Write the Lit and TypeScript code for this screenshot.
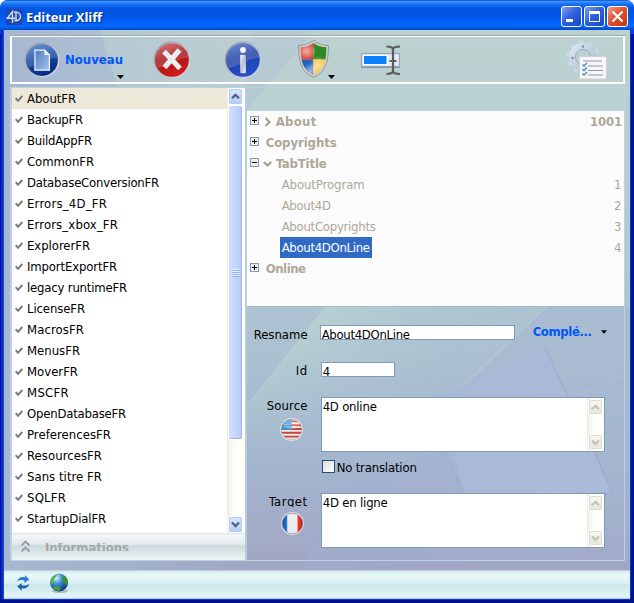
import { LitElement, html, css, svg, nothing } from "lit";
import { customElement, property } from "lit/decorators.js";

/** A single line of text tracked so that it occupies a given width. */
@customElement("fit-text")
class FitText extends LitElement {
  @property() text = "";
  @property({ type: Number }) w = 0;
  static styles = css`
    :host { display: inline-block; white-space: pre; flex: none; }
  `;
  updated() {
    const s = this.renderRoot.querySelector("span") as HTMLElement;
    s.style.letterSpacing = "0px";
    const gap = (this.w + 1 - s.getBoundingClientRect().width) / this.text.length;
    s.style.letterSpacing = `${gap.toFixed(3)}px`;
  }
  render() {
    return html`<span>${this.text}</span>`;
  }
}

const t = (text: string, w: number) => html`<fit-text .text=${text} .w=${w}></fit-text>`;

const FILES: [string, number][] = [
  ["AboutFR", 48], ["BackupFR", 55], ["BuildAppFR", 64], ["CommonFR", 66],
  ["DatabaseConversionFR", 131], ["Errors_4D_FR", 79], ["Errors_xbox_FR", 90],
  ["ExplorerFR", 62], ["ImportExportFR", 89], ["legacy runtimeFR", 99],
  ["LicenseFR", 57], ["MacrosFR", 56], ["MenusFR", 52], ["MoverFR", 50],
  ["MSCFR", 41], ["OpenDatabaseFR", 98], ["PreferencesFR", 83],
  ["ResourcesFR", 74], ["Sans titre FR", 74], ["SQLFR", 38], ["StartupDialFR", 78],
];

interface Node { label: string; w: number; box?: "+" | "-"; arrow?: "right" | "down"; id?: string; idw?: number; sel?: boolean; }
const TREE: Node[] = [
  { label: "About", w: 40, box: "+", arrow: "right", id: "1001", idw: 31 },
  { label: "Copyrights", w: 70, box: "+" },
  { label: "TabTitle", w: 50, box: "-", arrow: "down" },
  { label: "AboutProgram", w: 82, id: "1", idw: 7 },
  { label: "About4D", w: 48, id: "2", idw: 7 },
  { label: "AboutCopyrights", w: 93, id: "3", idw: 7 },
  { label: "About4DOnLine", w: 87, id: "4", idw: 7, sel: true },
  { label: "Online", w: 39, box: "+" },
];

const check = svg`<svg class="check" width="8" height="8" viewBox="0 0 8 8"><path d="M.7 3.2 3 5.800 7.300 1" fill="none" stroke="#777" stroke-width="1.900"/></svg>`;
const chev = (up: boolean) => html`<svg width="9" height="7" viewBox="0 0 9 7"><path d=${up ? "M1 5.3 4.5 1.8 8 5.3" : "M1 1.5 4.5 5 8 1.5"} fill="none" stroke="currentColor" stroke-width="2.3"/></svg>`;
const caret = html`<svg class="caret" width="7" height="4" viewBox="0 0 7 4"><path d="M0 0h7L3.5 4z" fill="#000"/></svg>`;

const logo = html`<svg width="16" height="16" viewBox="0 0 16 16"><rect width="16" height="16" fill="#2444ae"/><path d="M6.500 14V2.500L1.300 9.200H9M8 3h1.600c6.500 0 6.500 8.800 0 8.800H8.500M10 3v9" fill="none" stroke="#cfe0ff" stroke-width="1.400"/></svg>`;

const orb = (id: string, hi: string, mid: string, lo: string) => svg`
  <defs>
    <linearGradient id=${id} x1="0" y1="0" x2=".3" y2="1"><stop offset="0" stop-color=${hi}/><stop offset=".5" stop-color=${mid}/><stop offset="1" stop-color=${lo}/></linearGradient>
    <linearGradient id=${id + "r"} x1="0" y1="0" x2="1" y2="1"><stop offset="0" stop-color="#8f93a5"/><stop offset="1" stop-color="#dcdfe6"/></linearGradient>
  </defs>
  <circle cx="19" cy="19" r="17.6" fill="url(#${id})" stroke="url(#${id}r)" stroke-width="1.6"/>
  <path d="M2.6 19A16.4 16.4 0 0 1 35.4 17C27 16 18 24 5 27Q2.6 23 2.6 19z" fill="#fff" opacity=".17"/>`;

const newIcon = html`<svg width="36" height="36" viewBox="0 0 38 38">${orb("nb", "#4f84c8", "#174a9f", "#072c85")}
  <defs><linearGradient id="pg" x1="0" y1="0" x2="1" y2="1"><stop offset="0" stop-color="#4d7cc0"/><stop offset="1" stop-color="#a7c4ec"/></linearGradient></defs>
  <path d="M11.5 8.5h10.300l5 5v16.200H11.500z" fill="url(#pg)" stroke="#f0f4fb" stroke-width="1.300"/><path d="M21.500 8v5.800h5.600z" fill="#e8eef8"/></svg>`;
const closeIcon = html`<svg width="38" height="38" viewBox="0 0 38 38">${orb("cb", "#d25a5e", "#a51519", "#d01b18")}
  <path d="M11 10.500 27 27.500M26.500 9 11.500 26.500" stroke="#eceeec" stroke-width="5.200"/></svg>`;
const infoIcon = html`<svg width="38" height="38" viewBox="0 0 38 38">${orb("ib", "#4d72d0", "#2040a4", "#234ed0")}
  <defs><linearGradient id="ii" x1="0" y1="0" x2="1" y2="1"><stop offset="0" stop-color="#fff"/><stop offset=".5" stop-color="#b9bec8"/><stop offset="1" stop-color="#f4f5f8"/></linearGradient></defs>
  <circle cx="19" cy="9" r="2.900" fill="#f6f8fc"/><rect x="16.200" y="13.800" width="5.600" height="18.500" rx=".8" fill="url(#ii)"/></svg>`;
const shieldIcon = html`<svg width="33" height="40" viewBox="0 0 34 40">
  <defs><clipPath id="sh"><path d="M17 3.500C13 6.500 8 8 3.800 8c0 12 1 22.500 13.200 28.500C29.200 30.500 30.200 20 30.200 8 26 8 21 6.500 17 3.500z"/></clipPath>
  <radialGradient id="sg" cx=".5" cy=".5" r=".5"><stop offset="0" stop-color="#fff" stop-opacity=".6"/><stop offset="1" stop-color="#fff" stop-opacity="0"/></radialGradient></defs>
  <path d="M17 .8C13 4.400 7 6 1.700 6 1.500 21 3.500 33 17 39 30.500 33 32.500 21 32.300 6 27 6 21 4.400 17 .8z" fill="#cdd0d0" stroke="#878c8e" stroke-width=".9"/>
  <g clip-path="url(#sh)"><rect x="2" y="2" width="15" height="18.500" fill="#df3b2d"/><rect x="17" y="2" width="15" height="18.500" fill="#2b8b22"/><rect x="2" y="20.500" width="15" height="19" fill="#2162ba"/><rect x="17" y="20.500" width="15" height="19" fill="#f7bd25"/>
  <ellipse cx="10" cy="12" rx="10" ry="9" fill="url(#sg)"/><ellipse cx="14" cy="33" rx="9" ry="9" fill="url(#sg)"/><ellipse cx="22" cy="26" rx="9" ry="9" fill="url(#sg)"/></g></svg>`;
const renameIcon = html`<svg width="42" height="36" viewBox="0 0 42 36">
  <rect x="1.500" y="11.500" width="38" height="13" fill="#e4eaf2" stroke="#9aa5c0" stroke-width="1.200"/><path d="M1 25.500h39" stroke="#8792ae"/>
  <rect x="3" y="13" width="25" height="10" fill="#fff"/><rect x="4" y="14" width="22.500" height="8" fill="#0a80f8"/>
  <path d="M26.500 4.500c4 0 6.500 .5 6.500 3 0-2.500 3-3 7-3M33 7v22M26.500 32c4 0 6.500-.8 6.500-3.200 0 2.400 3 3.200 7 3.200M29.500 19h7" fill="none" stroke="#5c5c5c" stroke-width="2.200"/></svg>`;
const gearIcon = html`<svg width="42" height="42" viewBox="0 0 42 42">
  <defs><linearGradient id="gg" x1="0" y1="0" x2="1" y2="1"><stop offset="0" stop-color="#dbe5ef"/><stop offset="1" stop-color="#a9bdd2"/></linearGradient></defs>
  <circle cx="17" cy="18" r="14.800" fill="none" stroke="#cbd8e5" stroke-width="3.600" stroke-dasharray="4.800 4.500"/>
  <circle cx="17" cy="18" r="10.800" fill="none" stroke="url(#gg)" stroke-width="6.400"/>
  <circle cx="17" cy="18" r="7.600" fill="none" stroke="#8fa2b4" stroke-width=".8"/>
  <circle cx="17" cy="7.500" r="1.200" fill="#73879a"/><circle cx="6.500" cy="19" r="1.200" fill="#73879a"/>
  <rect x="13.500" y="17.500" width="27" height="22.500" fill="#f6f6f8" stroke="#d0d0d6"/>
  <path d="M17 22h19M22 27h15M22 31.500h15M22 36h15" stroke="#9a94a8" stroke-width="1"/>
  <path d="m16.500 25.500 1.500 1.500 3-3m-4.500 6 1.500 1.500 3-3m-4.500 6 1.500 1.500 3-3" fill="none" stroke="#2e92b8" stroke-width="1.300"/></svg>`;

const usFlag = html`<svg width="23" height="23" viewBox="0 0 23 23"><defs><clipPath id="uc"><circle cx="11.500" cy="11.500" r="10.300"/></clipPath></defs>
  <circle cx="11.500" cy="11.500" r="11.200" fill="#fff"/><g clip-path="url(#uc)"><rect width="23" height="23" fill="#f3ece9"/>
  <path d="M0 3.400h23M0 7.200h23M0 11h23M0 14.800h23M0 18.600h23" stroke="#c9433c" stroke-width="1.900"/><rect width="11.500" height="12" fill="#3e8ccd"/>
  <path d="M3 4h8M2 6.500h9M2 9h9" stroke="#9ccbee" stroke-width="1" stroke-dasharray="1 1.200"/></g>
  <circle cx="11.500" cy="11.500" r="10.300" fill="none" stroke="#8d8890" stroke-opacity=".6"/><ellipse cx="11.500" cy="6.500" rx="8" ry="4.500" fill="#fff" opacity=".25"/></svg>`;
const frFlag = html`<svg width="23" height="23" viewBox="0 0 23 23"><defs><clipPath id="fc"><circle cx="11.500" cy="11.500" r="10.300"/></clipPath>
  <linearGradient id="fb"><stop offset="0" stop-color="#0d3f8c"/><stop offset="1" stop-color="#2a7fe4"/></linearGradient><linearGradient id="fr"><stop offset="0" stop-color="#f0402c"/><stop offset="1" stop-color="#a81210"/></linearGradient></defs>
  <circle cx="11.500" cy="11.500" r="11.200" fill="#fff"/><g clip-path="url(#fc)"><rect width="6.500" height="23" fill="url(#fb)"/><rect x="6.500" width="10" height="23" fill="#ececef"/><rect x="16.500" width="7" height="23" fill="url(#fr)"/></g>
  <circle cx="11.500" cy="11.500" r="10.300" fill="none" stroke="#77747c" stroke-opacity=".7"/></svg>`;

const syncIcon = html`<svg width="15" height="18" viewBox="0 0 16 18"><path d="M1 7.500C3 2.500 6.500 2 9.500 3V.5L14 5.200 9 9V6.300C6 5.300 3.500 5.500 1 7.500z" fill="#2b7bd3"/><path d="M14.500 9.500c-1.500 5-5 6-8.500 5V17.500L1.300 12.500 6 9v2.300c3 1 6 .5 8.500-1.800z" fill="#1f62b5"/></svg>`;
const globeIcon = html`<svg width="20" height="20" viewBox="0 0 20 20"><defs><radialGradient id="gl" cx=".35" cy=".25" r=".8"><stop offset="0" stop-color="#e3f4ff"/><stop offset=".4" stop-color="#4290dc"/><stop offset="1" stop-color="#0e2a78"/></radialGradient></defs>
  <ellipse cx="11" cy="18" rx="8" ry="2" fill="#8a98a0" opacity=".6"/><circle cx="10" cy="9.500" r="9" fill="url(#gl)"/>
  <path d="M2 6Q4 2 8 1.500L7 4 4.500 6l1 2.500L3 11 1.500 10z" fill="#58b43c"/><path d="m12.500 4 3-1Q19 6 18.700 10l-2.200 2.500-2-3.500z" fill="#35962e"/><path d="m5 13.500 4.500-.5 2.500 2.500-2 2.500Q6 17.500 4 15.500z" fill="#3da336"/></svg>`;

const backdrop = html`<svg class="backdrop" viewBox="4 30 626 540" preserveAspectRatio="none">
  <defs>
    <linearGradient id="b0" x1="0" y1="0" x2="0" y2="1"><stop offset="0" stop-color="#b6cbd3"/><stop offset=".55" stop-color="#adc3d1"/><stop offset=".78" stop-color="#a5b7cf"/><stop offset="1" stop-color="#a0a6c5"/></linearGradient>
    <linearGradient id="b1" x1="0" y1="0" x2="1" y2="0"><stop offset="0" stop-color="#a6b8d2"/><stop offset="1" stop-color="#a6b8d2" stop-opacity="0"/></linearGradient>
    <linearGradient id="b2" x1="0" y1="0" x2="0" y2="1"><stop offset="0" stop-color="#bcd2d0"/><stop offset="1" stop-color="#bcd2d0" stop-opacity="0"/></linearGradient>
    <linearGradient id="b5" gradientUnits="userSpaceOnUse" x1="290" y1="340" x2="400" y2="450"><stop offset="0" stop-color="#b7d1d1" stop-opacity=".85"/><stop offset=".6" stop-color="#b0c9d3" stop-opacity=".35"/><stop offset="1" stop-color="#abc3d3" stop-opacity="0"/></linearGradient>
    <linearGradient id="fade" x1="0" y1="0" x2="0" y2="1"><stop offset=".3" stop-color="#fff"/><stop offset="1" stop-color="#000"/></linearGradient>
    <mask id="bm" maskUnits="userSpaceOnUse" x="240" y="300" width="320" height="160"><rect x="240" y="300" width="320" height="160" fill="url(#fade)"/></mask>
    <linearGradient id="b3" x1="0" y1="0" x2="0" y2="1"><stop offset="0" stop-color="#a8bbd1" stop-opacity=".85"/><stop offset="1" stop-color="#a4b2cf" stop-opacity=".35"/></linearGradient>
    <linearGradient id="b4" x1="0" y1="0" x2="1" y2="1"><stop offset="0" stop-color="#a6b9d5"/><stop offset="1" stop-color="#abbbd9"/></linearGradient>
  </defs>
  <rect x="4" y="30" width="626" height="540" fill="url(#b0)"/>
  <rect x="4" y="30" width="250" height="540" fill="url(#b1)"/>
  <path d="M315 30H630V307H240V118z" fill="url(#b2)"/>
  <path d="M100 30h153l-10 80-100 60z" fill="#c2d5d3" opacity=".45"/>
  <path d="M326 307H546L450 400 400 460H246V407z" fill="url(#b5)" mask="url(#bm)"/>
  <path d="M546 307H630V560H430L380 460 452 397z" fill="url(#b3)"/>
  <path d="M546 307 452 397M326 307 246 407" stroke="#c6dbdf" stroke-width="1" opacity=".55"/>
  <path d="M630 372 568 400" stroke="#bacbdc" stroke-width="1" opacity=".5"/>
  <path d="M440 397 545 347 611 492 464 495z" fill="url(#b4)"/>
  <path d="M545 347 568 397M444 450l20 44M595 452l16 40-8 4" fill="none" stroke="#98abd1" stroke-width="1.200" opacity=".8"/>
  <path d="M350 480 400 462 444 450 464 495 520 560 300 570z" fill="#a2aed0" opacity=".3"/>
</svg>`;

@customElement("app-root")
class AppRoot extends LitElement {
  static styles = css`
    :host { display: block; width: 634px; height: 603px; background: #fff; font: 13px/21px "DejaVu Sans Condensed", "DejaVu Sans", sans-serif; color: #000; }
    * { box-sizing: border-box; }
    svg { display: block; flex: none; }
    .win { height: 603px; display: flex; flex-direction: column; border-radius: 8px 8px 0 0; overflow: hidden; background: #0a3fdc; }
    .title { height: 30px; display: flex; align-items: center; padding: 3px 6px 0 6px; background: linear-gradient(#0b4bc4 0, #3c92ff 1.500px, #1872f4 4px, #0456e2 8px, #0054e3 15px, #0262fa 22px, #0368ff 26px, #0048c8 30px); }
    .name { margin: 0 0 0 4px; font: bold 13px/20px "Open Sans", "Noto Sans", sans-serif; color: #fff; text-shadow: 1px 1px 1px #0a2a90; }
    .buttons { margin-left: auto; display: flex; gap: 2px; }
    .wb { width: 21px; height: 21px; border: 1px solid #fff; border-radius: 3px; background: linear-gradient(135deg, #7ea2f2, #2f62de 45%, #1b46c4); }
    .wb.x { background: linear-gradient(135deg, #f0a38c, #e0522c 45%, #c4380f); }
    .frame { flex: 1; display: flex; flex-direction: column; margin: 0 4px 4px; box-shadow: -1px 0 #0855dd, 1px 0 #0038d8, 0 1px #0038d8, -3px 0 #0829c9, 4px 4px #00138c, -4px 4px #00138c; min-height: 0; background: #ece9d8; }
    .body { height: 540px; position: relative; display: flex; flex-direction: column; gap: 4px; padding: 5px 5px 9px 6px; }
    .backdrop { position: absolute; left: 0; top: 0; width: 626px; height: 540px; }
    .toolbar { position: relative; height: 48px; border: 2px solid #fff; border-top: 1px solid #fff; box-shadow: 0 -1px #9fa9a5; margin-top: 1px; display: flex; align-items: center; padding: 0 0 0 12px; margin-bottom: -1px; }
    .new { margin-left: 0; display: flex; align-items: center; }
    .blue { color: #0057f7; font-weight: bold; }
    .new .blue { margin-left: 5px; }
    .caret { align-self: flex-end; }
    .new .caret { margin: 0 0 -1px -6px; }
    .close { margin-left: 29px; }
    .info { margin-left: 33px; }
    .shield { margin: -2px 0 0 35px; display: flex; }
    .shield .caret { margin: 0 0 0 -2px; }
    .rename { margin-left: 25px; }
    .gear { margin-left: auto; margin-right: 15px; }
    .panes { position: relative; flex: 1; display: flex; min-height: 0; }
    .left { width: 235px; display: flex; flex-direction: column; border: 1px solid #bcd3df; border-left-width: 2px; border-right-width: 0; min-height: 0; }
    .listwrap { height: 445px; display: flex; background: #fff; }
    .list { width: 215px; overflow: hidden; }
    .file { height: 21px; display: flex; align-items: center; padding: 0 0 0 3px; }
    .file.on { background: #ece9d8; }
    .file fit-text { margin-left: 4px; }
    .sb { width: 17px; display: flex; flex-direction: column; background: linear-gradient(90deg, #eeede5, #fdfdf8 40%, #fefefb); padding: 0 1px; }
    .sbtn { height: 17px; flex: none; border: 1px solid #fff; outline: 1px solid #b4c8f4; outline-offset: -2px; border-radius: 3px; background: linear-gradient(#dbe5ff, #b7cafa); color: #4d6185; display: flex; align-items: center; justify-content: center; }
    .thumb { height: 335px; background: linear-gradient(90deg, #d2defe, #c3d3fd 60%, #b5c8fb); border: 1px solid #fff; border-radius: 3px; box-shadow: inset -1px -1px #9eb4ea; display: flex; align-items: center; justify-content: center; }
    .thumb i { width: 7px; height: 8px; background: repeating-linear-gradient(#eef4fe 0 1px, #8cb0f8 1px 2px); }
    .sb .end { margin-top: auto; }
    .infobar { flex: 1; display: flex; align-items: center; padding-left: 8px; background: linear-gradient(#d5e2e7, #f3f7f8 2px, #e2eaed 11px, #cddade 13px, #d8e3e6 18px, #edf3f4); color: #a6a8a8; font-weight: bold; }
    .infotext { height: 8px; margin: 0 0 0 14px; overflow: hidden; display: flex; align-items: flex-start; }
    .infotext fit-text { margin-top: -6px; }
    .right { width: 381px; display: flex; flex-direction: column; border: 1px solid #bcd3df; border-left: 2px solid #b6cdd9; }
    .head { height: 23px; border-bottom: 1px solid #bcd6e2; }
    .tree { height: 196px; background: #fbfbfb; border-bottom: 1px solid #9fbcc9; color: #aca899; }
    .row { height: 21px; display: flex; align-items: center; padding: 0 3px 0 3px; }
    .row.top { font-weight: bold; }
    .pm { width: 9px; height: 9px; margin: 0 0 2px 0; }
    .arrow { width: 12px; margin: 0 2px 0 3px; color: #a09e98; display: flex; justify-content: center; }
    .lab { margin-left: 7px; display: flex; }
    .arrow + .lab { margin-left: 0; }
    .leaf .lab { margin-left: 30px; height: 21px; padding: 0 2px 0 2px; }
    .sel .lab { background: #316ac5; color: #fff; }
    .id { margin-left: auto; margin-right: -1px; }
    .form { flex: 1; padding: 0; }
    .line { display: flex; align-items: flex-start; }
    .line.r1 { height: 55px; padding-top: 18px; }
    .line.r2 { height: 35px; }
    .line.r3 { height: 63px; }
    .line.r4 { height: 33px; padding-left: 75px; }
    .cap { width: 61px; margin-right: 12px; display: flex; flex-direction: column; align-items: flex-end; line-height: 18px; }
    .r1 .cap { margin-top: 1px; }
    .cap svg { margin-right: 5px; margin-top: 3px; }
    .r5 .cap svg { margin-right: 4px; margin-top: 5px; }
    .field { border: 1px solid #7f9db9; background: #fff; height: 15px; overflow: hidden; padding-left: 1px; line-height: 17px; }
    .w1 { width: 195px; }
    .w2 { width: 74px; margin-left: 1px; }
    .area { width: 284px; height: 55px; margin-left: 1px; margin-top: 0; display: flex; line-height: 18px; }
    .area .sb { margin-left: auto; padding: 1px; }
    .area .sbtn { height: 16px; background: linear-gradient(#f8f7f1, #e9e8dd); outline-color: #dddccf; color: #c5c3b8; }
    .clip { height: 14px; overflow: hidden; }
    .combo { margin-left: 18px; display: flex; align-items: center; margin-top: -4px; }
    .combo .caret { align-self: center; margin-left: 9px; width: 6px; }
    .cb { width: 13px; height: 13px; border: 1px solid #1c5180; background: linear-gradient(135deg, #dcdcd7, #fff); margin: 0 2px 0 0; }
    .r4 { line-height: 15px; }
    .status { flex: 1; display: flex; align-items: center; padding: 0 0 4px 12px; gap: 18px; background: linear-gradient(#b5cbd0, #dff1f4 2px, #e8f7f8 5px, #dbf1f5 13px, #cbe7ea 15px, #d4ecee 20px, #e7f6f8 27px, #b2c6c0 29px); }
  `;

  private scroll(thumb: boolean) {
    return html`<div class="sb"><div class="sbtn">${chev(true)}</div>${thumb ? html`<div class="thumb"><i></i></div>` : nothing}<div class="sbtn end">${chev(false)}</div></div>`;
  }

  private node(n: Node) {
    const box = n.box
      ? html`<svg class="pm" viewBox="0 0 9 9"><rect x=".5" y=".5" width="8" height="8" fill="#f0efe8" stroke="#7b9ebd"/><path d=${n.box === "+" ? "M2 4.500h5M4.500 2v5" : "M2 4.500h5"} stroke="#000"/></svg>` : nothing;
    const arrow = n.arrow
      ? html`<span class="arrow"><svg width="9" height="10" viewBox="0 0 9 10"><path d=${n.arrow === "right" ? "M2.500 1 6.500 5 2.500 9" : "M.8 3 4.500 6.500 8.200 3"} fill="none" stroke="currentColor" stroke-width="2"/></svg></span>` : nothing;
    return html`<div class="row ${n.box ? "top" : "leaf"} ${n.sel ? "sel" : ""}">${box}${arrow}<span class="lab">${t(n.label, n.w)}</span>${n.id ? html`<span class="id">${t(n.id, n.idw!)}</span>` : nothing}</div>`;
  }

  render() {
    return html`<div class="win">
      <div class="title">${logo}<span class="name">${t("Editeur Xliff", 75)}</span>
        <div class="buttons">
          <div class="wb"><svg width="19" height="19"><rect x="4" y="12" width="7" height="3" fill="#fff"/></svg></div>
          <div class="wb"><svg width="19" height="19"><path d="M4.500 5.500h10v9h-10zM4 5h11" fill="none" stroke="#fff"/><path d="M4 5.500h11" stroke="#fff" stroke-width="3"/></svg></div>
          <div class="wb x"><svg width="19" height="19"><path d="m4.500 4.500 10 10m0-10-10 10" stroke="#fff" stroke-width="2.200"/></svg></div>
        </div>
      </div>
      <div class="frame">
        <div class="body">
          ${backdrop}
          <div class="toolbar">
            <div class="new">${newIcon}<span class="blue">${t("Nouveau", 57)}</span>${caret}</div>
            <div class="close">${closeIcon}</div>
            <div class="info">${infoIcon}</div>
            <div class="shield">${shieldIcon}${caret}</div>
            <div class="rename">${renameIcon}</div>
            <div class="gear">${gearIcon}</div>
          </div>
          <div class="panes">
            <div class="left">
              <div class="listwrap">
                <div class="list">${FILES.map(([n, w], i) => html`<div class="file ${i === 0 ? "on" : ""}">${check}${t(n, w)}</div>`)}</div>
                ${this.scroll(true)}
              </div>
              <div class="infobar"><svg width="11" height="13" viewBox="0 0 11 13"><path d="m1.500 5.500 4-4 4 4m-8 6 4-4 4 4" fill="none" stroke="#9a9da0" stroke-width="1.800"/></svg>
                <div class="infotext">${t("Informations", 83)}</div></div>
            </div>
            <div class="right">
              <div class="head"></div>
              <div class="tree">${TREE.map((n) => this.node(n))}</div>
              <div class="form">
                <div class="line r1"><div class="cap">${t("Resname", 53)}</div><div class="field w1">${t("About4DOnLine", 87)}</div><div class="combo blue">${t("Complé...", 58)}${caret}</div></div>
                <div class="line r2"><div class="cap">${t("Id", 11)}</div><div class="field w2">${t("4", 7)}</div></div>
                <div class="line r3"><div class="cap">${t("Source", 40)}${usFlag}</div><div class="field area">${t("4D online", 53)}${this.scroll(false)}</div></div>
                <div class="line r4"><span class="cb"></span>${t("No translation", 79)}</div>
                <div class="line r5"><div class="cap"><span class="clip">${t("Target", 38)}</span>${frFlag}</div><div class="field area">${t("4D en ligne", 64)}${this.scroll(false)}</div></div>
              </div>
            </div>
          </div>
        </div>
        <div class="status">${syncIcon}${globeIcon}</div>
      </div>
    </div>`;
  }
}
